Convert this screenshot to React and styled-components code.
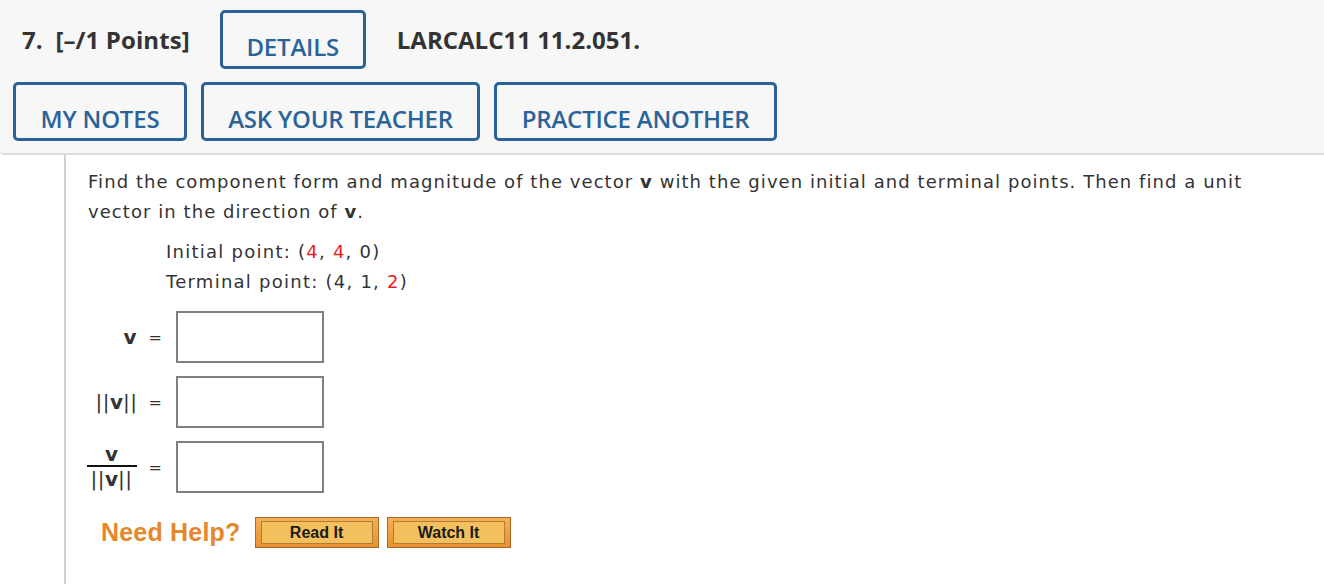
import React from "react";
import styled, { createGlobalStyle } from "styled-components";

const Global = createGlobalStyle`
  html, body { margin: 0; padding: 0; background: #fff; }
  body { font-family: "DejaVu Sans", Verdana, sans-serif; color: #333; }
`;

const Page = styled.div`
  width: 1324px;
  height: 584px;
  overflow: hidden;
  display: flex;
  flex-direction: column;
`;

const Header = styled.div`
  background: #f7f7f7;
  border-bottom: 2px solid #dcdcdc;
  border-bottom-left-radius: 4px;
  padding: 10px 13px 12px;
  display: flex;
  flex-direction: column;
  gap: 13px;
  font-family: "Open Sans", sans-serif;
`;

const Row = styled.div`
  display: flex;
  align-items: center;
  gap: ${(p) => p.$gap ?? 14}px;
`;

const Title = styled.div`
  font-size: 24px;
  font-weight: 700;
  color: #333;
  margin-left: ${(p) => p.$ml || 0}px;
  white-space: pre;
  letter-spacing: ${(p) => p.$ls ?? 0}px;
`;

const OutlineButton = styled.button`
  box-sizing: border-box;
  height: 59px;
  border: 3px solid #2a6399;
  border-radius: 5px;
  background: transparent;
  color: #2a6399;
  font-family: "Open Sans", sans-serif;
  font-weight: 600;
  font-size: 24px;
  line-height: 30px;
  padding: 19px 0 4px;
  width: ${(p) => p.$w}px;
  text-align: center;
  margin-left: ${(p) => p.$ml || 0}px;
  letter-spacing: -0.2px;
  cursor: pointer;
`;

const Body = styled.div`
  flex: 1;
  margin-left: 64px;
  border-left: 2px solid #cfcfcf;
  padding: 12px 20px 0 22px;
`;

const Para = styled.p`
  margin: 0;
  font-size: 18px;
  line-height: 30px;
  letter-spacing: 1.06px;
  color: #333;
`;

const Points = styled.div`
  margin: 10px 0 0 78px;
  font-size: 18px;
  line-height: 30px;
  letter-spacing: 1.25px;
  color: #333;
`;

const Red = styled.span`
  color: #e3251b;
`;

const Answers = styled.div`
  margin-top: 14px;
  display: grid;
  grid-template-columns: 74px 148px;
  column-gap: 14px;
  row-gap: 13px;
  align-items: center;
`;

const Label = styled.div`
  display: flex;
  justify-content: flex-end;
  align-items: center;
  font-size: 18px;
  color: #333;
`;

const Vec = styled.span`
  font-weight: 700;
  font-size: 20px;
`;

const Bars = styled.span`
  font-size: 20px;
  letter-spacing: 0.5px;
`;

const Eq = styled.span`
  margin-left: ${(p) => p.$ml ?? 12}px;
  font-size: 16px;
`;

const Fraction = styled.span`
  display: inline-flex;
  flex-direction: column;
  align-items: center;
  width: 50px;
  line-height: 20px;
`;

const FracLine = styled.span`
  width: 50px;
  height: 2px;
  background: #111;
  margin: 1px 0 2px;
`;

const Input = styled.input`
  box-sizing: border-box;
  width: 148px;
  height: 52px;
  border: 2px solid #7f7f7f;
  background: #fff;
  margin: 0;
`;

const HelpRow = styled.div`
  margin: 24px 0 0 13px;
  display: flex;
  align-items: center;
  gap: 14px;
`;

const HelpText = styled.span`
  font-family: "Liberation Sans", Arial, sans-serif;
  font-weight: 700;
  font-size: 25px;
  letter-spacing: 0.2px;
  color: #e4872d;
`;

const HelpButtons = styled.div`
  display: flex;
  gap: 8px;
`;

const OrangeButton = styled.button`
  box-sizing: border-box;
  width: 124px;
  height: 31px;
  padding: 3px 5px;
  border: 1px solid #a46b2b;
  background: linear-gradient(#f6ae55, #e9922f);
  cursor: pointer;
  display: flex;
`;

const OrangeInner = styled.span`
  flex: 1;
  border: 1px solid #b37a38;
  background: #f3c05e;
  font-family: "Liberation Sans", Arial, sans-serif;
  font-weight: 700;
  font-size: 16px;
  line-height: 21px;
  color: #1b1b1b;
  text-align: center;
`;

export default function App() {
  return (
    <Page>
      <Global />
      <Header>
        <Row $gap={0}>
          <Title $ml={9} $ls={0.1}>{"7.  [–/1 Points]"}</Title>
          <OutlineButton $w={146} $ml={30}>DETAILS</OutlineButton>
          <Title $ml={31}>LARCALC11 11.2.051.</Title>
        </Row>
        <Row $gap={14}>
          <OutlineButton $w={174}>MY NOTES</OutlineButton>
          <OutlineButton $w={279}>ASK YOUR TEACHER</OutlineButton>
          <OutlineButton $w={283}>PRACTICE ANOTHER</OutlineButton>
        </Row>
      </Header>
      <Body>
        <Para>
          Find the component form and magnitude of the vector <b>v</b> with the given initial and terminal points. Then find a unit vector in the direction of <b>v</b>.
        </Para>
        <Points>
          <div>
            Initial point: (<Red>4</Red>, <Red>4</Red>, 0)
          </div>
          <div>
            Terminal point: (4, 1, <Red>2</Red>)
          </div>
        </Points>
        <Answers>
          <Label>
            <Vec>v</Vec>
            <Eq>=</Eq>
          </Label>
          <Input type="text" />
          <Label>
            <Bars>||</Bars>
            <Vec>v</Vec>
            <Bars>||</Bars>
            <Eq $ml={11}>=</Eq>
          </Label>
          <Input type="text" />
          <Label>
            <Fraction>
              <Vec>v</Vec>
              <FracLine />
              <span>
                <Bars>||</Bars>
                <Vec>v</Vec>
                <Bars>||</Bars>
              </span>
            </Fraction>
            <Eq $ml={12}>=</Eq>
          </Label>
          <Input type="text" />
        </Answers>
        <HelpRow>
          <HelpText>Need Help?</HelpText>
          <HelpButtons>
            <OrangeButton>
              <OrangeInner>Read It</OrangeInner>
            </OrangeButton>
            <OrangeButton>
              <OrangeInner>Watch It</OrangeInner>
            </OrangeButton>
          </HelpButtons>
        </HelpRow>
      </Body>
    </Page>
  );
}
